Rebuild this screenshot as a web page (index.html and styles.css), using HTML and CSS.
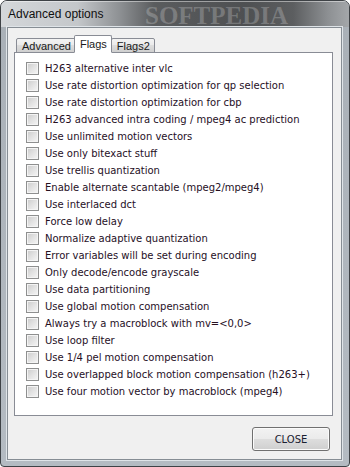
FILE: index.html
```html
<!DOCTYPE html>
<html>
<head>
<meta charset="utf-8">
<link rel="stylesheet" href="styles.css">
</head>
<body>
<div class="window">
  <div class="titlebar">
    <span class="title">Advanced options</span>
    <span class="wm wm-main">SOFTPEDIA</span>
  </div>
  <div class="client">
    <div class="tabs">
      <div class="tab">Advanced</div>
      <div class="tab tab-active">Flags</div>
      <div class="tab">Flags2</div>
    </div>
    <div class="panel">
      <div class="row"><span class="cb"></span><span class="lbl">H263 alternative inter vlc</span></div>
      <div class="row"><span class="cb"></span><span class="lbl">Use rate distortion optimization for qp selection</span></div>
      <div class="row"><span class="cb"></span><span class="lbl">Use rate distortion optimization for cbp</span></div>
      <div class="row"><span class="cb"></span><span class="lbl">H263 advanced intra coding / mpeg4 ac prediction</span></div>
      <div class="row"><span class="cb"></span><span class="lbl">Use unlimited motion vectors</span></div>
      <div class="row"><span class="cb"></span><span class="lbl">Use only bitexact stuff</span></div>
      <div class="row"><span class="cb"></span><span class="lbl">Use trellis quantization</span></div>
      <div class="row"><span class="cb"></span><span class="lbl">Enable alternate scantable (mpeg2/mpeg4)</span></div>
      <div class="row"><span class="cb"></span><span class="lbl">Use interlaced dct</span></div>
      <div class="row"><span class="cb"></span><span class="lbl">Force low delay</span></div>
      <div class="row"><span class="cb"></span><span class="lbl">Normalize adaptive quantization</span></div>
      <div class="row"><span class="cb"></span><span class="lbl">Error variables will be set during encoding</span></div>
      <div class="row"><span class="cb"></span><span class="lbl">Only decode/encode grayscale</span></div>
      <div class="row"><span class="cb"></span><span class="lbl">Use data partitioning</span></div>
      <div class="row"><span class="cb"></span><span class="lbl">Use global motion compensation</span></div>
      <div class="row"><span class="cb"></span><span class="lbl">Always try a macroblock with mv=&lt;0,0&gt;</span></div>
      <div class="row"><span class="cb"></span><span class="lbl">Use loop filter</span></div>
      <div class="row"><span class="cb"></span><span class="lbl">Use 1/4 pel motion compensation</span></div>
      <div class="row"><span class="cb"></span><span class="lbl">Use overlapped block motion compensation (h263+)</span></div>
      <div class="row"><span class="cb"></span><span class="lbl">Use four motion vector by macroblock (mpeg4)</span></div>
    </div>
    <div class="footer">
      <button class="btn">CLOSE</button>
    </div>
  </div>
</div>
</body>
</html>
```
FILE: styles.css
```css
html, body {
  margin: 0;
  padding: 0;
  background: #ffffff;
}

.window {
  width: 350px;
  height: 467px;
  box-sizing: border-box;
  border: 1px solid #3e4246;
  border-radius: 7px 7px 4px 4px;
  padding: 0 7px 6px 6px;
  display: flex;
  flex-direction: column;
  background: linear-gradient(180deg, #a9b0b7 0%, #b4bbc2 100%);
  overflow: hidden;
  position: relative;
}

.titlebar {
  height: 26px;
  flex: none;
  position: relative;
  margin: 0 -7px 0 -6px;
  padding-left: 7px;
  background: linear-gradient(90deg, #d4d7da 0%, #c4c7ca 22%, #8e9194 34%, #5a5c5e 44%, #4e5052 70%, #5c5e60 84%, #8d9093 94%, #a4a7aa 100%);
  box-shadow: inset 0 1px 0 rgba(255,255,255,0.45);
}

.title {
  position: relative;
  z-index: 2;
  display: block;
  padding-top: 6px;
  font-family: "Liberation Sans", Arial, sans-serif;
  font-size: 12px;
  color: #101010;
  line-height: 14px;
}

.wm {
  position: absolute;
  font-family: "Liberation Serif", "Times New Roman", serif;
  font-weight: bold;
  color: rgba(255,255,255,0.22);
  white-space: nowrap;
  z-index: 1;
}

.wm-main {
  left: 144px;
  top: 1px;
  font-size: 25px;
  line-height: 28px;
}

.client {
  flex: 1;
  display: flex;
  flex-direction: column;
  background: #f0f0f0;
  border: 1px solid #868d94;
  box-shadow: 0 0 0 1px #dfe4e8;
  position: relative;
  z-index: 2;
}

.tabs {
  display: flex;
  align-items: flex-end;
  height: 25px;
  padding-left: 8px;
  margin-bottom: -1px;
  position: relative;
  z-index: 2;
  font-family: "Liberation Sans", Arial, sans-serif;
  font-size: 11px;
}

.tab {
  height: 15px;
  box-sizing: border-box;
  border: 1px solid #898c95;
  background: linear-gradient(180deg, #f3f3f3 0%, #ebebeb 45%, #dddddd 50%, #cfcfcf 100%);
  color: #1a1a1a;
  padding: 1px 4px 0 5px;
  line-height: 13px;
  margin-right: -1px;
  border-radius: 2px 2px 0 0;
}

.tab-active {
  height: 18px;
  background: #ffffff;
  border-bottom-color: #ffffff;
  padding-top: 2px;
  position: relative;
  z-index: 3;
  margin-left: -1px;
}

.panel {
  flex: 1;
  margin: 0 8px 0 6px;
  background: #ffffff;
  border: 1px solid #898c95;
  padding: 7px 0 0 11px;
  font-family: "DejaVu Sans", Verdana, sans-serif;
  font-size: 10px;
  color: #26101f;
}

.row {
  display: flex;
  align-items: center;
  height: 17px;
  gap: 6px;
  white-space: nowrap;
}

.cb {
  width: 13px;
  height: 13px;
  box-sizing: border-box;
  border: 1px solid #8e8f8f;
  background: linear-gradient(135deg, #cbcbcb 0%, #e2e2e2 50%, #f6f6f6 100%);
  box-shadow: inset 0 0 0 1px #f4f4f4;
  flex: none;
}

.footer {
  display: flex;
  justify-content: flex-end;
  padding: 11px 11px 8px 0;
}

.btn {
  width: 78px;
  height: 24px;
  box-sizing: border-box;
  border: 1px solid #707070;
  border-radius: 3px;
  background: linear-gradient(180deg, #f2f2f2 0%, #ebebeb 48%, #dddddd 52%, #cfcfcf 100%);
  box-shadow: inset 0 0 0 1px #fbfbfb;
  font-family: "DejaVu Sans", Verdana, sans-serif;
  font-size: 10px;
  color: #1a2030;
  padding: 0;
  margin: 0;
}
```
